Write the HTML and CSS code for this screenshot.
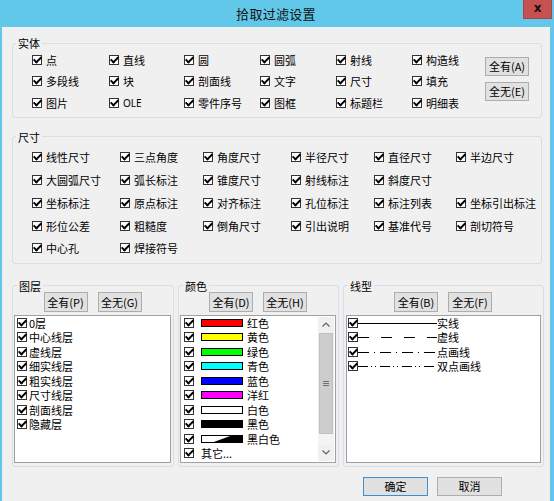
FILE: index.html
```html
<!DOCTYPE html>
<html lang="zh-CN">
<head>
<meta charset="utf-8">
<title>拾取过滤设置</title>
<link rel="stylesheet" href="styles.css">
</head>
<body>
<div class="window">
  <div class="titlebar">
    <span></span>
    <span class="title">拾取过滤设置</span>
    <span class="close">x</span>
  </div>
  <div class="client">
    <fieldset class="group entity">
      <legend>实体</legend>
      <div class="entity-body">
        <div class="entity-grid">
          <label class="chk"><span class="cb"></span>点</label>
          <label class="chk"><span class="cb"></span>直线</label>
          <label class="chk"><span class="cb"></span>圆</label>
          <label class="chk"><span class="cb"></span>圆弧</label>
          <label class="chk"><span class="cb"></span>射线</label>
          <label class="chk"><span class="cb"></span>构造线</label>
          <label class="chk"><span class="cb"></span>多段线</label>
          <label class="chk"><span class="cb"></span>块</label>
          <label class="chk"><span class="cb"></span>剖面线</label>
          <label class="chk"><span class="cb"></span>文字</label>
          <label class="chk"><span class="cb"></span>尺寸</label>
          <label class="chk"><span class="cb"></span>填充</label>
          <label class="chk"><span class="cb"></span>图片</label>
          <label class="chk"><span class="cb"></span><span class="latin">OLE</span></label>
          <label class="chk"><span class="cb"></span>零件序号</label>
          <label class="chk"><span class="cb"></span>图框</label>
          <label class="chk"><span class="cb"></span>标题栏</label>
          <label class="chk"><span class="cb"></span>明细表</label>
        </div>
        <div class="side-buttons">
          <button class="btn">全有(A)</button>
          <button class="btn">全无(E)</button>
        </div>
      </div>
    </fieldset>

    <fieldset class="group size">
      <legend>尺寸</legend>
      <div class="size-grid">
        <label class="chk"><span class="cb"></span>线性尺寸</label>
        <label class="chk"><span class="cb"></span>三点角度</label>
        <label class="chk"><span class="cb"></span>角度尺寸</label>
        <label class="chk"><span class="cb"></span>半径尺寸</label>
        <label class="chk"><span class="cb"></span>直径尺寸</label>
        <label class="chk"><span class="cb"></span>半边尺寸</label>
        <label class="chk"><span class="cb"></span>大圆弧尺寸</label>
        <label class="chk"><span class="cb"></span>弧长标注</label>
        <label class="chk"><span class="cb"></span>锥度尺寸</label>
        <label class="chk"><span class="cb"></span>射线标注</label>
        <label class="chk"><span class="cb"></span>斜度尺寸</label>
        <span></span>
        <label class="chk"><span class="cb"></span>坐标标注</label>
        <label class="chk"><span class="cb"></span>原点标注</label>
        <label class="chk"><span class="cb"></span>对齐标注</label>
        <label class="chk"><span class="cb"></span>孔位标注</label>
        <label class="chk"><span class="cb"></span>标注列表</label>
        <label class="chk"><span class="cb"></span>坐标引出标注</label>
        <label class="chk"><span class="cb"></span>形位公差</label>
        <label class="chk"><span class="cb"></span>粗糙度</label>
        <label class="chk"><span class="cb"></span>倒角尺寸</label>
        <label class="chk"><span class="cb"></span>引出说明</label>
        <label class="chk"><span class="cb"></span>基准代号</label>
        <label class="chk"><span class="cb"></span>剖切符号</label>
        <label class="chk"><span class="cb"></span>中心孔</label>
        <label class="chk"><span class="cb"></span>焊接符号</label>
      </div>
    </fieldset>

    <div class="bottom-row">
      <fieldset class="group sub">
        <legend>图层</legend>
        <div class="btn-row">
          <button class="btn">全有(P)</button>
          <button class="btn">全无(G)</button>
        </div>
        <div class="listbox layers">
          <div class="items">
            <div class="item"><span class="cb"></span>0层</div>
            <div class="item"><span class="cb"></span>中心线层</div>
            <div class="item"><span class="cb"></span>虚线层</div>
            <div class="item"><span class="cb"></span>细实线层</div>
            <div class="item"><span class="cb"></span>粗实线层</div>
            <div class="item"><span class="cb"></span>尺寸线层</div>
            <div class="item"><span class="cb"></span>剖面线层</div>
            <div class="item"><span class="cb"></span>隐藏层</div>
          </div>
        </div>
      </fieldset>

      <fieldset class="group sub">
        <legend>颜色</legend>
        <div class="btn-row">
          <button class="btn">全有(D)</button>
          <button class="btn">全无(H)</button>
        </div>
        <div class="listbox colors">
          <div class="items">
            <div class="item"><span class="cb"></span><span class="sw sw-red"></span>红色</div>
            <div class="item"><span class="cb"></span><span class="sw sw-yellow"></span>黄色</div>
            <div class="item"><span class="cb"></span><span class="sw sw-green"></span>绿色</div>
            <div class="item"><span class="cb"></span><span class="sw sw-cyan"></span>青色</div>
            <div class="item"><span class="cb"></span><span class="sw sw-blue"></span>蓝色</div>
            <div class="item"><span class="cb"></span><span class="sw sw-magenta"></span>洋红</div>
            <div class="item"><span class="cb"></span><span class="sw sw-white"></span>白色</div>
            <div class="item"><span class="cb"></span><span class="sw sw-black"></span>黑色</div>
            <div class="item"><span class="cb"></span><svg class="sw-bw" width="42" height="8" viewBox="0 0 42 8"><rect x="0.5" y="0.5" width="41" height="7" fill="#fff" stroke="#000"/><polygon points="10,8 32,0 42,0 42,8" fill="#000"/></svg>黑白色</div>
            <div class="item"><span class="cb"></span><span class="other">其它...</span></div>
          </div>
          <div class="scrollbar">
            <div class="sb-btn"><svg width="8" height="5" viewBox="0 0 8 5"><polyline points="0.5,4.5 4,1 7.5,4.5" fill="none" stroke="#606060" stroke-width="1.2"/></svg></div>
            <div class="sb-thumb"><span class="grip"></span></div>
            <div class="sb-track"></div>
            <div class="sb-btn"><svg width="8" height="5" viewBox="0 0 8 5"><polyline points="0.5,0.5 4,4 7.5,0.5" fill="none" stroke="#606060" stroke-width="1.2"/></svg></div>
          </div>
        </div>
      </fieldset>

      <fieldset class="group sub">
        <legend>线型</legend>
        <div class="btn-row">
          <button class="btn">全有(B)</button>
          <button class="btn">全无(F)</button>
        </div>
        <div class="listbox ltypes">
          <div class="items">
            <div class="item"><span class="cb"></span><svg class="lt" width="79" height="10" viewBox="0 0 79 10"><line x1="0" y1="5.5" x2="79" y2="5.5" stroke="#000"/></svg>实线</div>
            <div class="item"><span class="cb"></span><svg class="lt" width="79" height="10" viewBox="0 0 79 10"><line x1="0" y1="5.5" x2="79" y2="5.5" stroke="#000" stroke-dasharray="11 12"/></svg>虚线</div>
            <div class="item"><span class="cb"></span><svg class="lt" width="79" height="10" viewBox="0 0 79 10"><line x1="0" y1="5.5" x2="79" y2="5.5" stroke="#000" stroke-dasharray="11 5 1 5"/></svg>点画线</div>
            <div class="item"><span class="cb"></span><svg class="lt" width="79" height="10" viewBox="0 0 79 10"><line x1="0" y1="5.5" x2="79" y2="5.5" stroke="#000" stroke-dasharray="10 3 1 3 1 4"/></svg>双点画线</div>
          </div>
        </div>
      </fieldset>
    </div>

    <div class="footer">
      <button class="btn wide default">确定</button>
      <button class="btn wide">取消</button>
    </div>
  </div>
</div>
</body>
</html>
```
FILE: styles.css
```css
* { box-sizing: border-box; }

html, body {
  margin: 0;
  padding: 0;
}

body {
  width: 554px;
  height: 501px;
  overflow: hidden;
  font-family: "Noto Sans CJK SC", "Noto Sans", sans-serif;
  font-size: 11px;
  color: #000;
}

.window {
  width: 554px;
  height: 501px;
  background: #62c8ea;
  padding: 0 4px 0 2px;
  display: flex;
  flex-direction: column;
}

.titlebar {
  height: 27px;
  flex: none;
  display: grid;
  grid-template-columns: 1fr auto 1fr;
  align-items: start;
}

.title {
  font-size: 13px;
  line-height: 27px;
  color: #111;
  letter-spacing: 0.3px;
}

.close {
  justify-self: end;
  width: 29px;
  height: 19px;
  margin-right: -2px;
  background: #c75050;
  border: 1px solid #a84444;
  border-top: none;
  color: #111;
  font-family: "DejaVu Sans", sans-serif;
  font-weight: bold;
  font-size: 12px;
  line-height: 16px;
  text-align: center;
}

.client {
  flex: 1;
  background: #f0f0f0;
  padding: 0 6px 0 10px;
  display: flex;
  flex-direction: column;
}

.group {
  margin: 0;
  padding: 0;
  min-width: 0;
  border: 1px solid #d5dfe5;
  border-radius: 3px;
}

.group > legend {
  margin-left: 3px;
  padding: 0 2px;
  font-size: 11px;
  line-height: 12px;
}

.entity {
  margin: 10px 2px 0 0;
}

.entity-body {
  display: flex;
  padding: 0 0 3px 19px;
}

.entity-grid {
  display: grid;
  grid-template-columns: 77px 75px 76px 76px 76px 73px;
  grid-auto-rows: 21.5px;
}

.side-buttons {
  display: flex;
  flex-direction: column;
  gap: 6px;
  padding-top: 8px;
}

.size {
  margin: 13px 2px 0 0;
}

.size-grid {
  display: grid;
  grid-template-columns: 88px 83px 88px 83px 82px 1fr;
  grid-template-rows: 23px 22px 24px 22px 22px;
  padding: 3px 0 4px 19px;
}

.chk {
  display: flex;
  align-items: center;
  gap: 4px;
  line-height: 14px;
  white-space: nowrap;
}

.latin {
  font-family: "Noto Sans", "Open Sans", sans-serif;
  font-size: 10px;
}

.cb {
  width: 10px;
  height: 10px;
  flex: none;
  border: 1px solid #333;
  background: #fff;
  display: flex;
  align-items: center;
  justify-content: center;
}

.cb::after {
  content: "";
  width: 3px;
  height: 6px;
  border: solid #000;
  border-width: 0 2px 2px 0;
  transform: translateY(-1px) rotate(45deg);
}

.btn {
  width: 44px;
  height: 19px;
  padding: 0;
  margin: 0;
  font-family: inherit;
  font-size: 11px;
  line-height: 17px;
  color: #000;
  background: #e1e1e1;
  border: 1px solid #adadad;
  border-radius: 0;
}

.btn.wide {
  width: 65px;
}

.btn.default {
  border-color: #3c8fd0;
}

.bottom-row {
  display: grid;
  grid-template-columns: 162px 161px 201px;
  column-gap: 4px;
  margin-top: 16px;
}

.sub {
  padding: 0 2px 3px 1px;
}

.btn-row {
  display: flex;
  justify-content: center;
  gap: 10px;
  height: 20px;
}

.btn-row .btn {
  height: 20px;
  line-height: 18px;
}

.listbox {
  margin-top: 3px;
  height: 148px;
  background: #fff;
  border: 1px solid #a0a0a0;
  display: flex;
}

.items {
  flex: 1;
  display: flex;
  flex-direction: column;
}

.layers .items { padding-left: 2px; }
.colors .items { padding-left: 3px; }
.ltypes .items { padding-left: 1px; }
.ltypes { margin-left: 1px; }

.item {
  height: 14.5px;
  display: flex;
  align-items: center;
  line-height: 14px;
  white-space: nowrap;
}

.layers .item .cb { margin-right: 2px; }
.colors .item .cb { margin-right: 7px; }

.sw {
  width: 42px;
  height: 8px;
  border: 1px solid #000;
  margin-right: 4px;
  flex: none;
}

.sw-bw {
  margin-right: 4px;
  flex: none;
  display: block;
}

.sw-red { background: #ff0000; }
.sw-yellow { background: #ffff00; }
.sw-green { background: #00ff00; }
.sw-cyan { background: #00ffff; }
.sw-blue { background: #0000ff; }
.sw-magenta { background: #ff00ff; }
.sw-white { background: #ffffff; }
.sw-black { background: #000000; }

.lt {
  display: block;
  flex: none;
}

.scrollbar {
  width: 16px;
  flex: none;
  display: flex;
  flex-direction: column;
  background: #f0f0f0;
  margin: 1px 1px 1px 0;
}

.sb-btn {
  height: 16px;
  flex: none;
  display: flex;
  align-items: center;
  justify-content: center;
}

.sb-thumb {
  height: 101px;
  flex: none;
  background: #cdcdcd;
  border: 1px solid #c0c0c0;
  margin: 0 1px;
  display: flex;
  align-items: center;
  justify-content: center;
}

.grip {
  width: 6px;
  height: 5px;
  border-top: 1px solid #707070;
  border-bottom: 1px solid #707070;
  background: linear-gradient(#707070, #707070) center / 6px 1px no-repeat;
}

.sb-track {
  flex: 1;
  background: #f4f4f4;
}

.footer {
  display: flex;
  justify-content: flex-end;
  gap: 9px;
  margin-top: 10px;
  padding-right: 42px;
}
```
